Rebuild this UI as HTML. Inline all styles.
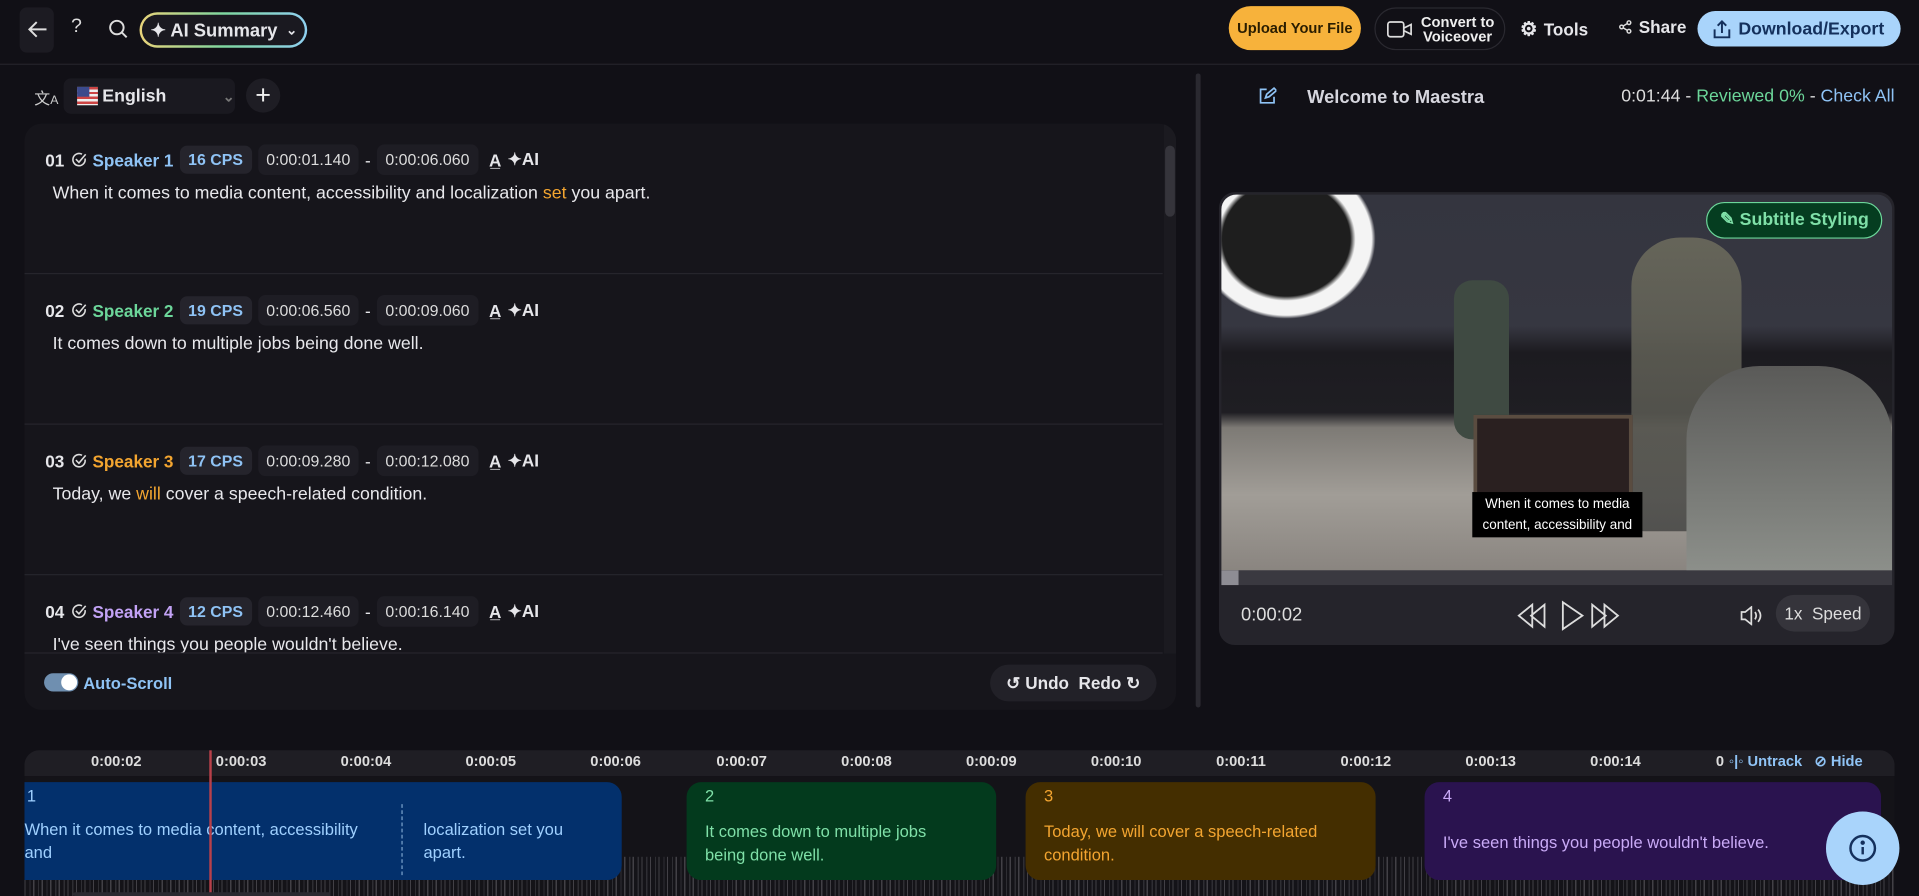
<!DOCTYPE html>
<html><head><meta charset="utf-8"><style>
*{box-sizing:border-box;margin:0;padding:0}
html,body{width:1919px;height:896px;overflow:hidden;background:#111016}
#w{position:absolute;left:0;top:0;width:1568px;height:732px;transform:scale(1.22385,1.2240);transform-origin:0 0;font-family:"Liberation Sans",sans-serif;color:#e6e6ea;background:#111016}
.a{position:absolute}
.fl{display:flex;align-items:center}
.b{font-weight:bold}
.tb{border-bottom:1px solid #24232a}
.chip{background:#25242c;border-radius:6px;padding:4px 7px;font-size:13px}
.seg{position:absolute;left:0;width:930px;border-bottom:1px solid #26252c}
.hd{position:absolute;left:17px;top:17px;display:flex;align-items:center;gap:5px;font-size:14px}
.tx{position:absolute;left:23px;top:49px;font-size:14.5px;color:#e8e8ec}
.tm{background:#1e1d24;border-radius:6px;padding:5px 7px;font-size:13px;color:#ddd}
.lab{position:absolute;top:2px;font-size:12px;font-weight:bold;color:#ddd;transform:translateX(-50%)}
.blk{position:absolute;top:639px;height:80px;border-radius:12px;font-size:13.5px;line-height:19px}
</style></head><body><div id="w">
<div class="a tb" style="left:0;top:0;width:1568px;height:53px"></div>
<div class="a" style="left:16px;top:6px;width:28px;height:37px;background:#1c1b22;border-radius:6px"></div>
<svg class="a" style="left:21px;top:14px" width="20" height="20" viewBox="0 0 20 20" fill="none" stroke="#ddd" stroke-width="1.6"><path d="M17 10H3M9 4l-6 6 6 6"/></svg>
<div class="a" style="left:58px;top:13px;font-size:16px;color:#ddd">?</div>
<svg class="a" style="left:88px;top:15px" width="17" height="17" viewBox="0 0 17 17" fill="none" stroke="#ddd" stroke-width="1.6"><circle cx="7.5" cy="7.5" r="5.5"/><path d="M11.5 11.5l4 4"/></svg>
<div class="a" style="left:114px;top:10px;width:137px;height:29px;border-radius:15px;background:linear-gradient(90deg,#e9d47a,#7fd7a0,#8fd0f0);padding:2px"><div class="fl" style="width:100%;height:100%;border-radius:13px;background:#1a1920;padding-left:7px;gap:3px;font-size:15px;font-weight:bold">✦ AI Summary <span style="font-size:11px;margin-left:4px">⌄</span></div></div>

<div class="a fl b" style="left:1004px;top:5px;width:108px;height:36px;background:#f7b23b;border-radius:18px;justify-content:center;font-size:12px;color:#2a1d00">Upload Your File</div>
<div class="a fl" style="left:1123px;top:6px;width:107px;height:35px;border:1.5px solid #2a2930;border-radius:18px;padding-left:9px;gap:6px">
<svg width="22" height="16" viewBox="0 0 22 16" fill="none" stroke="#ddd" stroke-width="1.4"><rect x="1" y="2" width="13" height="12" rx="2"/><path d="M14 7l6-3v8l-6-3"/></svg>
<div class="b" style="font-size:12px;line-height:12px;text-align:center;color:#eee">Convert to<br>Voiceover</div></div>
<div class="a fl b" style="left:1242px;top:14px;gap:5px;font-size:14px"><span style="font-size:16px">⚙</span>Tools</div>
<div class="a fl b" style="left:1322px;top:14px;gap:5px;font-size:14px"><svg width="12" height="12" viewBox="0 0 12 12" fill="none" stroke="#ddd" stroke-width="1.2"><circle cx="9" cy="2.5" r="1.5"/><circle cx="3" cy="6" r="1.5"/><circle cx="9" cy="9.5" r="1.5"/><path d="M4.3 5.2l3.4-2M4.3 6.8l3.4 2"/></svg>Share</div>
<div class="a fl b" style="left:1387px;top:9px;width:166px;height:29px;background:#a9d4fb;border-radius:15px;justify-content:center;gap:6px;font-size:14.5px;color:#14305c">
<svg width="14" height="16" viewBox="0 0 14 16" fill="none" stroke="#14305c" stroke-width="1.6"><path d="M7 11V2M3.5 5L7 1.5 10.5 5M1 8v6.5h12V8"/></svg>Download/Export</div>

<div class="a" style="left:28px;top:70px;font-size:13px;color:#ccc">文<span style="font-size:10px">A</span></div>
<div class="a fl" style="left:52px;top:64px;width:140px;height:29px;background:#1a1920;border-radius:6px;padding-left:11px;gap:4px;font-size:14.5px;font-weight:bold">
<div style="width:22px;height:15px;background:repeating-linear-gradient(#c44 0 2px,#eee 2px 4px);position:relative"><div style="position:absolute;left:0;top:0;width:10px;height:8px;background:#3b4a8c"></div></div>English<span style="margin-left:42px;color:#777;font-size:12px">⌄</span></div>
<div class="a fl" style="left:201px;top:64px;width:28px;height:28px;border-radius:14px;background:#1e1d24;justify-content:center;font-size:22px;color:#eee">+</div>

<div class="a" style="left:20px;top:101px;width:941px;height:479px;background:#16151b;border-radius:14px;overflow:hidden">
 <div class="seg" style="top:0;height:123px"><div class="hd"><span class="b">01</span><svg width="13" height="13" viewBox="0 0 13 13" fill="none" stroke="#ddd" stroke-width="1.3"><path d="M11.5 5.5A5 5 0 1 1 9 2"/><path d="M4 6l2.5 2.5L12 2"/></svg><span class="b" style="color:#8fc3f5">Speaker 1</span><span class="chip b" style="color:#8fc3f5">16 CPS</span><span class="tm">0:00:01.140</span>-<span class="tm">0:00:06.060</span><span class="b" style="margin-left:4px">A̲</span><span class="b">✦AI</span></div><div class="tx">When it comes to media content, accessibility and localization <span style="color:#f3a530">set</span> you apart.</div></div>
 <div class="seg" style="top:123px;height:123px"><div class="hd"><span class="b">02</span><svg width="13" height="13" viewBox="0 0 13 13" fill="none" stroke="#ddd" stroke-width="1.3"><path d="M11.5 5.5A5 5 0 1 1 9 2"/><path d="M4 6l2.5 2.5L12 2"/></svg><span class="b" style="color:#6cd69a">Speaker 2</span><span class="chip b" style="color:#8fc3f5">19 CPS</span><span class="tm">0:00:06.560</span>-<span class="tm">0:00:09.060</span><span class="b" style="margin-left:4px">A̲</span><span class="b">✦AI</span></div><div class="tx">It comes down to multiple jobs being done well.</div></div>
 <div class="seg" style="top:246px;height:123px"><div class="hd"><span class="b">03</span><svg width="13" height="13" viewBox="0 0 13 13" fill="none" stroke="#ddd" stroke-width="1.3"><path d="M11.5 5.5A5 5 0 1 1 9 2"/><path d="M4 6l2.5 2.5L12 2"/></svg><span class="b" style="color:#f3a530">Speaker 3</span><span class="chip b" style="color:#8fc3f5">17 CPS</span><span class="tm">0:00:09.280</span>-<span class="tm">0:00:12.080</span><span class="b" style="margin-left:4px">A̲</span><span class="b">✦AI</span></div><div class="tx">Today, we <span style="color:#f3a530">will</span> cover a speech-related condition.</div></div>
 <div class="seg" style="top:369px;height:64px;overflow:hidden"><div class="hd"><span class="b">04</span><svg width="13" height="13" viewBox="0 0 13 13" fill="none" stroke="#ddd" stroke-width="1.3"><path d="M11.5 5.5A5 5 0 1 1 9 2"/><path d="M4 6l2.5 2.5L12 2"/></svg><span class="b" style="color:#c2a2f5">Speaker 4</span><span class="chip b" style="color:#8fc3f5">12 CPS</span><span class="tm">0:00:12.460</span>-<span class="tm">0:00:16.140</span><span class="b" style="margin-left:4px">A̲</span><span class="b">✦AI</span></div><div class="tx">I've seen things you people wouldn't believe.</div></div>
 <div class="a" style="left:931px;top:0;width:10px;height:433px;background:#1b1a20"><div style="margin:18px 1px 0;height:58px;background:#35343b;border-radius:4px"></div></div>
 <div class="a" style="left:16px;top:449px;width:28px;height:15px;border-radius:8px;background:#6f8fb0"><div style="position:absolute;right:1px;top:1px;width:13px;height:13px;border-radius:7px;background:#fff"></div></div>
 <div class="a b" style="left:48px;top:450px;font-size:13.5px;color:#8fc3f5">Auto-Scroll</div>
 <div class="a fl b" style="left:789px;top:442px;width:136px;height:30px;border-radius:15px;background:#222128;justify-content:center;gap:6px;font-size:14px">↺ Undo&nbsp; Redo ↻</div>
</div>
<div class="a" style="left:977px;top:60px;width:4px;height:518px;background:#2a2930;border-radius:2px"></div>

<svg class="a" style="left:1028px;top:71px" width="15" height="15" viewBox="0 0 15 15" fill="none" stroke="#8fc3f5" stroke-width="1.4"><path d="M7 2H2v11h11V8M6 9l1-3 6-5 2 2-6 5z"/></svg>
<div class="a b" style="left:1068px;top:71px;font-size:15px;color:#d6d6de">Welcome to Maestra</div>
<div class="a" style="right:20px;top:71px;font-size:14.5px;color:#ddd">0:01:44 - <span style="color:#6cd69a">Reviewed 0%</span> - <span style="color:#8fc3f5">Check All</span></div>

<div class="a" style="left:996px;top:157px;width:552px;height:370px;background:#25242b;border-radius:13px;overflow:hidden">
 <div class="a" style="left:2px;top:2px;width:548px;height:307px;border-radius:12px 12px 0 0;overflow:hidden;background:linear-gradient(180deg,#34353f 0%,#363741 35%,#1c1b20 42%,#1f1e23 58%,#7d7a75 62%,#a19d97 80%,#8a8580 100%)">
  <div class="a" style="left:-10px;top:-20px;width:140px;height:125px;background:radial-gradient(ellipse at 45% 45%,#1e1e1e 0 48%,#f4f4f4 52% 64%,transparent 67%)"></div>
  <div class="a" style="left:335px;top:35px;width:90px;height:240px;background:linear-gradient(#6b6a5c,#4a4a48);border-radius:40px 40px 10px 10px;opacity:.9"></div>
  <div class="a" style="left:380px;top:140px;width:168px;height:167px;background:linear-gradient(#5a5a58,#8c8f8a);border-radius:60px 60px 0 0"></div>
  <div class="a" style="left:190px;top:70px;width:45px;height:130px;background:#3f4a42;border-radius:15px"></div>
  <div class="a" style="left:206px;top:180px;width:130px;height:95px;background:#2a2020;border:3px solid #5a4c40"></div>
  <div class="a" style="left:205px;top:243px;width:139px;height:37px;background:#000;color:#fff;font-size:11px;line-height:17px;text-align:center;padding-top:2px">When it comes to media<br>content, accessibility and</div>
  <div class="a fl b" style="right:8px;top:6px;height:30px;padding:0 10px;border:1px solid #6cd69a;background:#053d20;border-radius:15px;color:#7fe0a8;font-size:14.5px;gap:4px">✎ Subtitle Styling</div>
 </div>
 <div class="a" style="left:2px;top:309px;width:548px;height:12px;background:#3a3940"><div style="width:14px;height:12px;background:#8e8d94"></div></div>
 <div class="a" style="left:18px;top:337px;font-size:15px;color:#ddd">0:00:02</div>
 <svg class="a" style="left:243px;top:333px" width="94" height="26" viewBox="0 0 94 26" fill="none" stroke="#ddd" stroke-width="1.5"><path d="M13 4L2 13l11 9zM23 4L12 13l11 9zM38 2v22l16-11zM62 4l11 9-11 9zM72 4l11 9-11 9z"/></svg>
 <svg class="a" style="left:425px;top:338px" width="20" height="16" viewBox="0 0 20 16" fill="none" stroke="#ddd" stroke-width="1.4"><path d="M2 5h3l5-4v14l-5-4H2zM13 5q2 3 0 6M15.5 3q4 5 0 10"/></svg>
 <div class="a fl" style="left:455px;top:329px;width:77px;height:30px;border-radius:15px;background:#35343b;justify-content:center;font-size:14px;color:#ddd">1x&nbsp; Speed</div>
</div>

<div class="a" style="left:20px;top:613px;width:1528px;height:21px;background:#1f1e24;border-radius:12px 12px 0 0">
 <div class="lab" style="left:75px">0:00:02</div><div class="lab" style="left:177px">0:00:03</div><div class="lab" style="left:279px">0:00:04</div><div class="lab" style="left:381px">0:00:05</div><div class="lab" style="left:483px">0:00:06</div><div class="lab" style="left:586px">0:00:07</div><div class="lab" style="left:688px">0:00:08</div><div class="lab" style="left:790px">0:00:09</div><div class="lab" style="left:892px">0:00:10</div><div class="lab" style="left:994px">0:00:11</div><div class="lab" style="left:1096px">0:00:12</div><div class="lab" style="left:1198px">0:00:13</div><div class="lab" style="left:1300px">0:00:14</div>
 <div class="a b fl" style="left:1380px;top:2px;font-size:12px;gap:4px;background:#1f1e24;padding-left:2px"><span style="color:#ddd">0</span><span style="color:#8fc3f5">◦|◦ Untrack</span><span style="color:#8fc3f5;margin-left:6px">⊘ Hide</span></div>
</div>
<div class="a" style="left:20px;top:634px;width:1528px;height:98px;background:#141318"></div>
<div class="a" style="left:20px;top:700px;width:1528px;height:32px;background:repeating-linear-gradient(90deg,#55545a 0 1px,transparent 1px 4px,#3a393f 4px 5px,transparent 5px 7px);opacity:.7"></div>
<div class="blk" style="left:20px;width:488px;background:#03306c;border-radius:0 12px 12px 0;color:#9fd0ff">
 <div class="a" style="left:2px;top:2px">1</div>
 <div class="a" style="left:0;top:29px;width:300px">When it comes to media content, accessibility<br>and</div>
 <div class="a" style="left:308px;top:18px;height:58px;border-left:1.5px dashed #7aa2cc"></div>
 <div class="a" style="left:326px;top:29px">localization set you<br>apart.</div>
</div>
<div class="blk" style="left:561px;width:253px;background:#033a1d;color:#7fe0a8"><div class="a" style="left:15px;top:2px">2</div><div class="a" style="left:15px;top:31px">It comes down to multiple jobs<br>being done well.</div></div>
<div class="blk" style="left:838px;width:286px;background:#442e00;color:#f3a530"><div class="a" style="left:15px;top:2px">3</div><div class="a" style="left:15px;top:31px">Today, we will cover a speech-related<br>condition.</div></div>
<div class="blk" style="left:1164px;width:373px;background:#2a134f;color:#c9aaf7"><div class="a" style="left:15px;top:2px">4</div><div class="a" style="left:15px;top:40px">I've seen things you people wouldn't believe.</div></div>
<div class="a" style="left:171px;top:613px;width:2px;height:119px;background:#b8404a"></div>
<div class="a" style="left:60px;top:729px;width:210px;height:3px;background:#2a2930;border-radius:2px"></div>
<div class="a fl" style="left:1492px;top:663px;width:60px;height:60px;border-radius:30px;background:#a9d4fb;justify-content:center">
<svg width="24" height="24" viewBox="0 0 24 24" fill="none" stroke="#14305c" stroke-width="2"><circle cx="12" cy="12" r="10"/><path d="M12 11v6"/><circle cx="12" cy="7.5" r=".8" fill="#14305c"/></svg></div>
</div></body></html>
